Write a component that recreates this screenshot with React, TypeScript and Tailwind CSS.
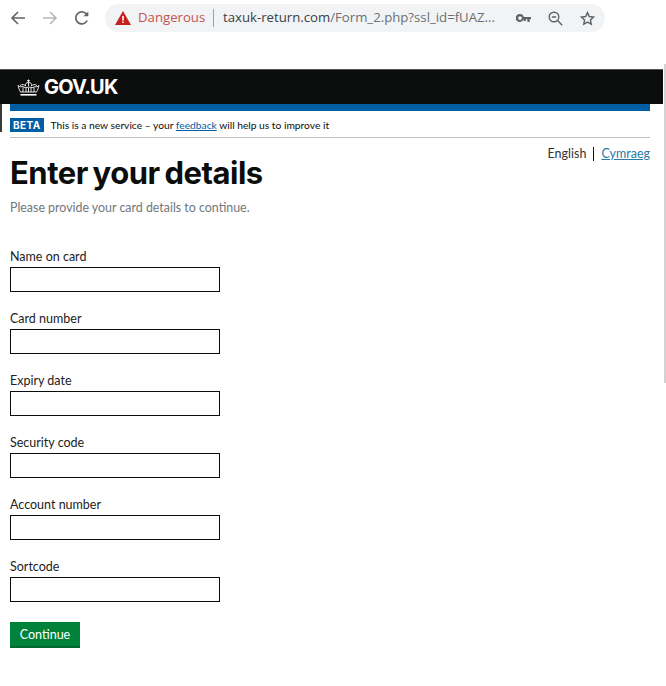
const fields = [
  "Name on card",
  "Card number",
  "Expiry date",
  "Security code",
  "Account number",
  "Sortcode",
]

function BrowserBar() {
  return (
    <div className="flex h-[36px] items-start pt-1">
      <div className="flex h-[28px] w-[105px] items-center pl-[10px] text-[#5f6368]">
        <svg width="16" height="16" viewBox="0 0 16 16" fill="none" stroke="currentColor" strokeWidth="1.6">
          <path d="M15 8H2M8 2 2 8l6 6" />
        </svg>
        <svg className="ml-[16px] text-[#b4b7bb]" width="16" height="16" viewBox="0 0 16 16" fill="none" stroke="currentColor" strokeWidth="1.6">
          <path d="M1 8h13M8 2l6 6-6 6" />
        </svg>
        <svg className="ml-[16px]" width="16" height="16" viewBox="0 0 16 16" fill="none" stroke="currentColor" strokeWidth="1.7">
          <path d="M13.2 10.5A6 6 0 1 1 13 5" />
          <path d="M14.3 1.6v4.7H9.6z" fill="currentColor" stroke="none" />
        </svg>
      </div>
      <div className="flex h-[28px] w-[500px] items-center rounded-full bg-[#f1f3f4] pl-[10px] font-['Open_Sans',sans-serif] text-[13.2px] whitespace-nowrap">
        <svg width="16" height="14" viewBox="0 0 16 14">
          <path d="M8 0 16 14H0z" fill="#c5221f" />
          <path d="M7.2 5h1.6v4.4H7.2zM7.2 10.4h1.6V12H7.2z" fill="#fff" />
        </svg>
        <span className="ml-[7px] w-[67px] text-[#c5534f]">Dangerous</span>
        <span className="mx-[8px] h-[18px] w-px bg-[#9aa0a6]" />
        <span className="ml-[1px] w-[277px] text-[#3c4043]">
          taxuk-return.com<span className="text-[#6b7074]">/Form_2.php?ssl_id=fUAZ...</span>
        </span>
        <svg className="ml-[16px] text-[#5f6368]" width="15" height="9" viewBox="0 0 15 9" fill="currentColor">
          <path d="M4 0a4 4 0 0 1 3.800 3H15v2.200h-1.400V8h-2.200V5.200H9.800V7H7.600V5.200A4 4 0 1 1 4 0Zm0 2.200a1.900 1.900 0 1 0 0 3.800 1.900 1.900 0 0 0 0-3.800Z" />
        </svg>
        <svg className="ml-[17px] text-[#5f6368]" width="15" height="15" viewBox="0 0 15 15" fill="none" stroke="currentColor" strokeWidth="1.4">
          <circle cx="6" cy="6" r="4.800" />
          <path d="M3.800 6h4.400M9.600 9.600l4.600 4.600" />
        </svg>
        <svg className="ml-[17px] text-[#5f6368]" width="15" height="15" viewBox="0 0 16 16" fill="none" stroke="currentColor" strokeWidth="1.5">
          <path d="m8 1.700 1.900 4.200 4.600.5-3.400 3.100.9 4.600L8 11.800l-4 2.300.9-4.600-3.400-3.100 4.600-.5z" />
        </svg>
      </div>
    </div>
  )
}

function Crown() {
  return (
    <svg width="23" height="17" viewBox="0 0 23 17" fill="none" stroke="#fff" strokeWidth="0.9">
      <path d="M11.500 0.500v3M10 1.700h3" />
      <path d="M11.500 3.500c-2.500 0-3.500 1.500-3 3.500M11.500 3.500c2.500 0 3.500 1.500 3 3.500" />
      <path d="M3 6.500c2-1.500 4.500-1 5.500.5M20 6.500c-2-1.500-4.500-1-5.500.5M11.500 3.500V7" />
      <path d="M1 6.500c.5 2 1.500 5 2.500 6.500h16c1-1.500 2-4.500 2.500-6.500-1.500 1.500-3 1.500-4 1-1 1-3 1.500-6 .5-3 1-5 .5-6-.5-1 .5-3.500.5-5-1Z" />
      <path d="M6 8.500V13M9 9V13M11.500 9V13M14 9V13M17 8.500V13" />
      <path d="M3.500 15.800h16" strokeWidth="1.600" />
    </svg>
  )
}

export default function App() {
  return (
    <div className="relative h-[686px] w-[666px] overflow-hidden bg-white font-['Lato',sans-serif] text-[#0b0c0c]">
      <BrowserBar />

      {/* scrollbar sliver at the crop edge */}
      <div className="absolute top-[64px] right-0 h-[319px] w-[2px] bg-[#d2d2d2]" />

      <div className="mt-[33px] mr-[3px] flex h-[35px] items-center border-t border-[#555] bg-[#0b0c0c] pl-[17px]">
        <Crown />
        <span className="ml-[4px] font-['Inter',sans-serif] text-[20px] font-bold tracking-[-0.8px] text-white">GOV.UK</span>
      </div>

      <div className="mr-[16px] border-l-2 border-[#3a3a3a] pl-[8px]">
        <div className="h-[7px] bg-[#005ea5]" />
        <div className="flex h-[21px] items-end">
          <span className="bg-[#005ea5] px-[3px] font-['Inter',sans-serif] text-[10px] leading-[14px] font-bold tracking-[0.4px] text-white">BETA</span>
          <p className="ml-[7px] text-[10.25px] leading-[14px] whitespace-nowrap text-[#0b0c0c]">
            This is a new service – your <a className="text-[#005ea5] underline">feedback</a> will help us to improve it
          </p>
        </div>
      </div>

      <div className="mr-[16px] ml-[10px]">
        <div className="h-[6px] border-b border-[#bfc1c3]" />
        <div className="flex h-[29px] items-center justify-end pt-[3px] text-[12.5px]">
          <span className="text-[#333]">English</span>
          <span className="mx-[7px] h-[14px] w-px bg-[#0b0c0c]" />
          <a className="text-[#2b7aa8] underline">Cymraeg</a>
        </div>

        <h1 className="mt-[-14px] font-['Inter',sans-serif] text-[31px] leading-[40px] font-bold tracking-[-0.5px] [word-spacing:-2px]">Enter your details</h1>
        <p className="mt-[7px] text-[12.4px] leading-[15px] text-[#6f777b]">Please provide your card details to continue.</p>

        <form className="mt-[34px] flex flex-col gap-[19px]">
          {fields.map((f) => (
            <label key={f} className="block">
              <span className="block text-[12.5px] leading-[15px] text-[#222]">{f}</span>
              <input className="mt-[3px] block h-[25px] w-[210px] border border-[#0b0c0c] bg-white" />
            </label>
          ))}
        </form>

        <button className="mt-[20px] block h-[26px] w-[70px] border-b-2 border-[#00692f] bg-[#00823b] pt-[3px] text-[12.5px] text-white">Continue</button>
      </div>
    </div>
  )
}
